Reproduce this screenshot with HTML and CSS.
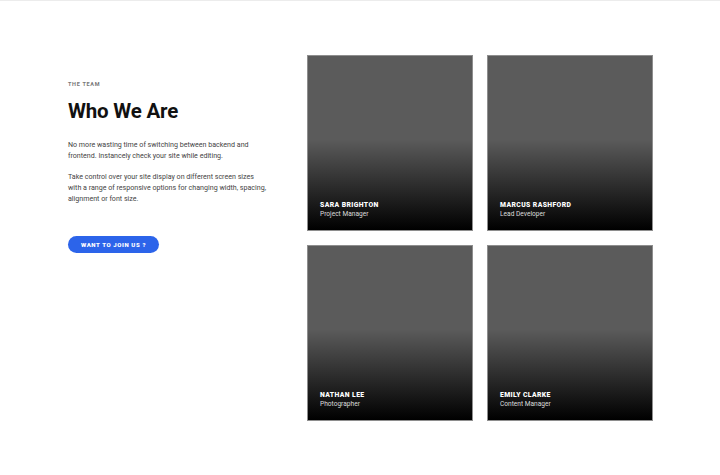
FILE: index.html
```html
<!DOCTYPE html>
<html>
<head>
<meta charset="utf-8">
<link rel="stylesheet" href="styles.css">
</head>
<body>
<div class="topline"></div>
<main class="page">
  <section class="intro">
    <div class="eyebrow">THE TEAM</div>
    <h1 class="title">Who We Are</h1>
    <p class="text">No more wasting time of switching between backend and frontend. Instancely check your site while editing.</p>
    <p class="text">Take control over your site display on different screen sizes with a range of responsive options for changing width, spacing, alignment or font size.</p>
    <a class="btn">WANT TO JOIN US ?</a>
  </section>
  <section class="grid">
    <div class="card"><div class="name">SARA BRIGHTON</div><div class="role">Project Manager</div></div>
    <div class="card"><div class="name">MARCUS RASHFORD</div><div class="role">Lead Developer</div></div>
    <div class="card"><div class="name">NATHAN LEE</div><div class="role">Photographer</div></div>
    <div class="card"><div class="name">EMILY CLARKE</div><div class="role">Content Manager</div></div>
  </section>
</main>
</body>
</html>
```
FILE: styles.css
```css
* { box-sizing: border-box; }
html, body { margin: 0; padding: 0; background: #fff; }
body { font-family: Roboto, "Liberation Sans", sans-serif; width: 720px; height: 475px; overflow: hidden; }
.topline { height: 1px; background: #ececec; }
.page { display: flex; padding: 54px 0 0 68px; }
.intro { width: 239px; padding-top: 25px; }
.eyebrow { font-size: 5.5px; font-weight: 700; letter-spacing: 0.7px; color: #777; line-height: 8px; }
.title { margin: 10px 0 0; font-size: 20.5px; font-weight: 700; color: #111; line-height: 26px; letter-spacing: -0.2px; }
.text { margin: 0; font-size: 7.1px; line-height: 11px; color: #444; width: 200px; }
.title + .text { margin-top: 15px; }
.text + .text { margin-top: 10px; }
.btn { display: inline-flex; align-items: center; justify-content: center; margin-top: 32px; width: 91px; height: 17px; border-radius: 9px; background: #2c64ea; color: #fff; font-size: 6px; font-weight: 900; letter-spacing: 0.6px; }
.grid { display: grid; grid-template-columns: 166px 166px; grid-template-rows: 176px 176px; column-gap: 14px; row-gap: 14px; }
.card { border: 1px solid #8e8e8e; background: linear-gradient(to bottom, #5b5b5b 0%, #5b5b5b 48%, #000 100%); display: flex; flex-direction: column; justify-content: flex-end; padding: 0 12px 11px; }
.name { font-size: 6.8px; font-weight: 900; color: #fff; letter-spacing: 0.4px; line-height: 9px; }
.role { font-size: 6.6px; color: #ddd; line-height: 9px; }
```
